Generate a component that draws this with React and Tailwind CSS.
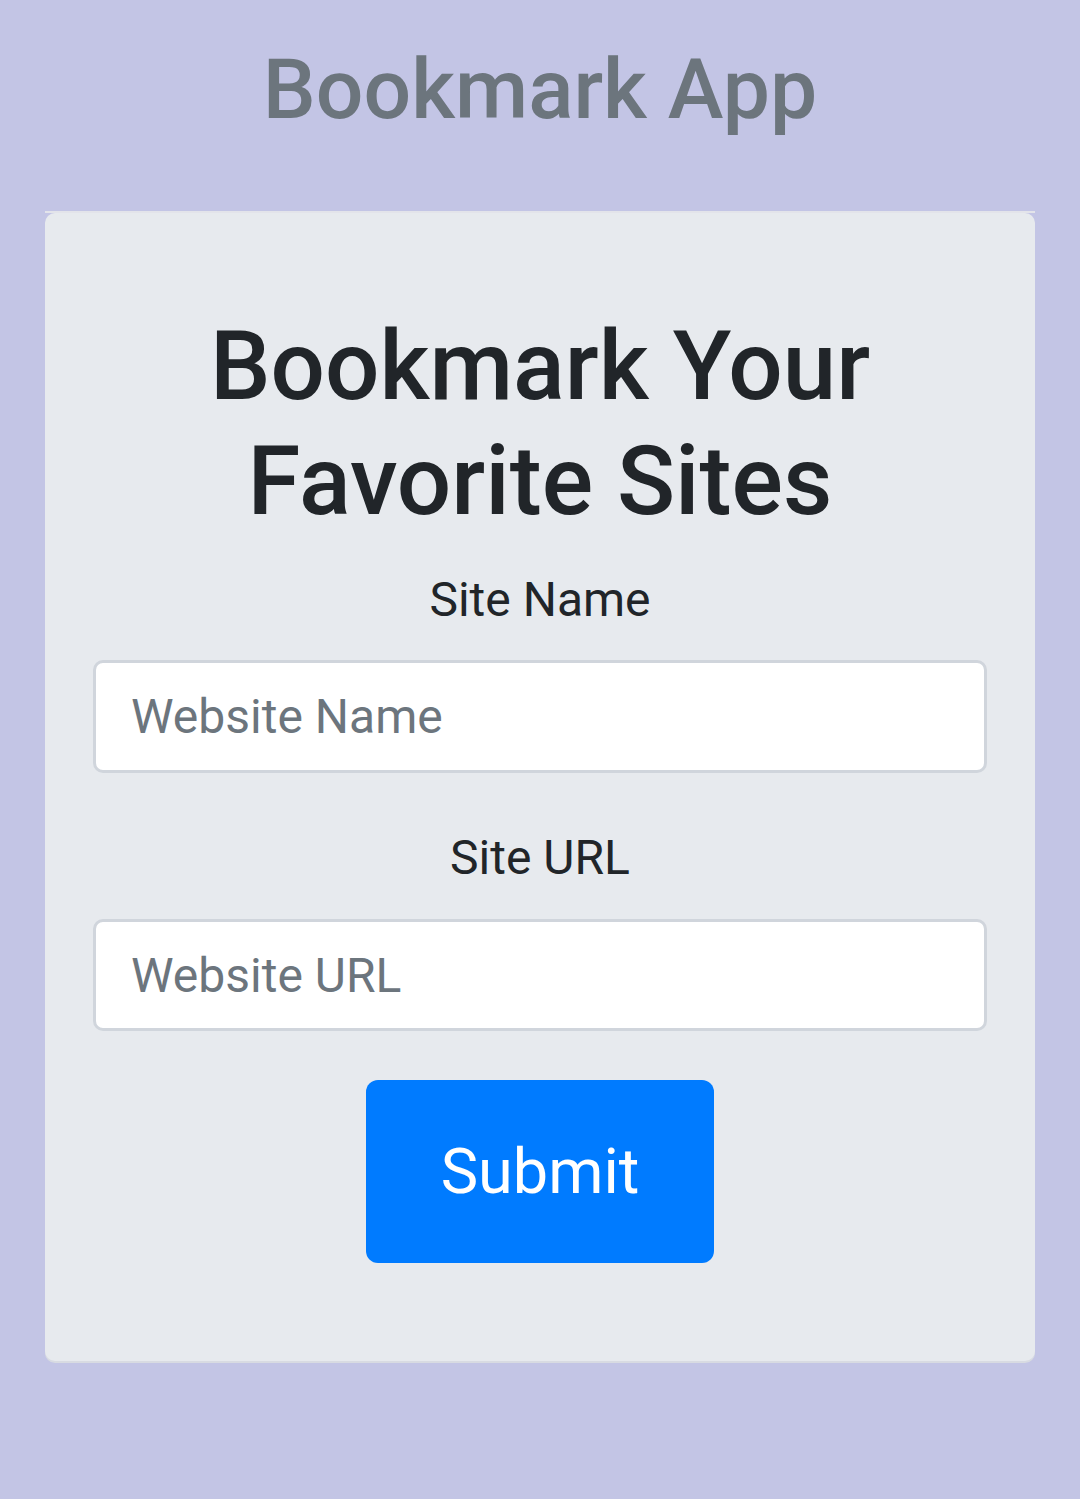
export default function App() {
  return (
    <div
      className="min-h-[1499px] w-full bg-[#c3c5e5]"
      style={{ fontFamily: "Roboto, 'Noto Sans', Arial, sans-serif" }}
    >
      <div className="pt-[40px] flex flex-col items-center">
        <h1 className="text-[84px] leading-[1.2] font-medium text-[#6c757d] m-0">
          Bookmark App
        </h1>
      </div>
      <div className="mx-[45px] mt-[70px]">
        <div className="h-[2px] bg-[#e3e4ea]" />
        <div className="bg-[#e7eaee] rounded-[10px] shadow-[0_2px_0_#d8dbe2] pt-[96px] pb-[98px] px-[48px] flex flex-col items-center">
          <h2 className="text-[96px] leading-[1.2] font-medium text-[#212529] text-center m-0">
            Bookmark Your
            <br />
            Favorite Sites
          </h2>
          <label className="mt-[25px] text-[48px] leading-[1.5] text-[#212529] text-center">
            Site Name
          </label>
          <input
            type="text"
            placeholder="Website Name"
            className="mt-[24px] w-full h-[113px] bg-white border-[3px] border-[#d0d5dc] rounded-[10px] px-[35px] text-[48px] text-[#495057] placeholder:text-[#6c757d] outline-none"
          />
          <label className="mt-[49px] text-[48px] leading-[1.5] text-[#212529] text-center">
            Site URL
          </label>
          <input
            type="text"
            placeholder="Website URL"
            className="mt-[25px] w-full h-[112px] bg-white border-[3px] border-[#d0d5dc] rounded-[10px] px-[35px] text-[48px] text-[#495057] placeholder:text-[#6c757d] outline-none"
          />
          <button className="mt-[49px] w-[348px] h-[183px] bg-[#007bff] rounded-[12px] text-white text-[63px] leading-none">
            Submit
          </button>
        </div>
      </div>
    </div>
  );
}
